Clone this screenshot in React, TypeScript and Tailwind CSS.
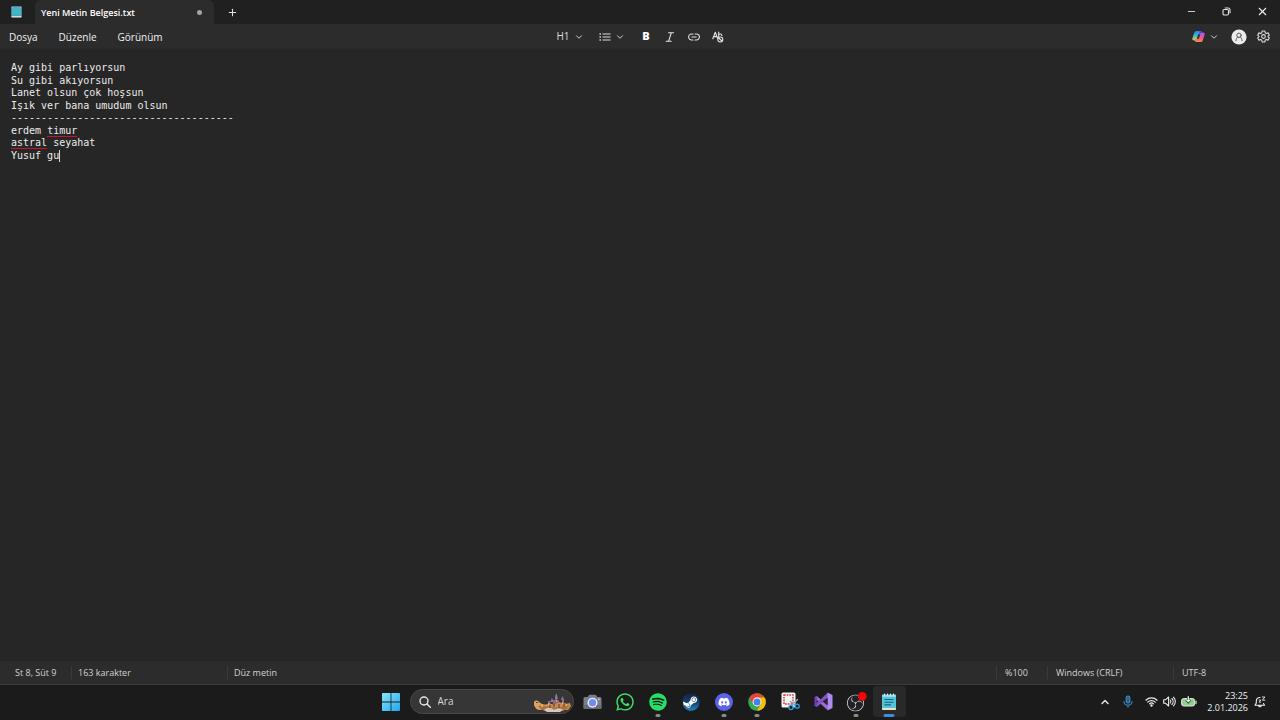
import type { ReactNode } from "react";
import { ChevronDown, ChevronUp, Minus, Plus, X } from "lucide-react";
import { FaSpotify, FaSteam, FaWhatsapp } from "react-icons/fa";
import { FaDiscord } from "react-icons/fa6";
import { SiObsstudio } from "react-icons/si";

type Word = { text: string; misspelled?: boolean };

const documentLines: Word[][] = [
  [{ text: "Ay gibi parlıyorsun" }],
  [{ text: "Su gibi akıyorsun" }],
  [{ text: "Lanet olsun çok hoşsun" }],
  [{ text: "Işık ver bana umudum olsun" }],
  [{ text: "-------------------------------------" }],
  [{ text: "erdem " }, { text: "timur", misspelled: true }],
  [{ text: "astral", misspelled: true }, { text: " seyahat" }],
  [{ text: "Yusuf gu" }],
];

function NotepadIcon({ className }: { className: string }) {
  return (
    <svg viewBox="0 0 16 18" className={className} aria-hidden="true">
      <rect x="1" y="2" width="14" height="15" rx="1.2" fill="#55c3d9" />
      <path d="M1 15h14v1a1 1 0 0 1-1 1H2a1 1 0 0 1-1-1z" fill="#e8e2cd" />
      <rect x="1" y="1.5" width="14" height="2.4" rx="1" fill="#8be0ee" />
      <path d="M3.5 .6v2M6.5 .6v2M9.5 .6v2M12.5 .6v2" stroke="#d8f5fa" strokeWidth="1" />
      <path d="M3.5 6.5h9M3.5 9.2h9M3.5 11.9h6.5" stroke="#17647d" strokeWidth="1.1" />
    </svg>
  );
}

function SmallNotepadIcon() {
  return (
    <svg viewBox="0 0 11 12" className="h-3 w-[11px]" aria-hidden="true">
      <rect x=".5" y=".5" width="10" height="11" rx=".8" fill="#3f9fb2" />
      <rect x="2" y="2" width="7" height="7.5" fill="#43b3c8" />
      <path d="M.5 1h10M1 .8v9.5M10 .8v9.5" stroke="#8fc9d3" strokeWidth=".7" />
      <path d="M.5 10.7h10" stroke="#d8dcd5" strokeWidth="1.4" />
    </svg>
  );
}

function ListIcon() {
  return (
    <svg viewBox="0 0 12 10" className="h-[10px] w-3" fill="none" stroke="#dcdcdc" aria-hidden="true">
      <path d="M3.5 2h8M3.5 5h8M3.5 8h8" strokeWidth="1" />
      <path d="M.5 2h1.4M.5 5h1.4M.5 8h1.4" strokeWidth="1.3" />
    </svg>
  );
}

function LinkIcon() {
  return (
    <svg viewBox="0 0 12 8" className="h-2 w-3" fill="none" stroke="#e2e2e2" strokeWidth="1.1" strokeLinecap="round" aria-hidden="true">
      <path d="M5 1H3.6a3 3 0 0 0 0 6H5M7 1h1.4a3 3 0 0 1 0 6H7M3.8 4h4.4" />
    </svg>
  );
}

function ItalicIcon() {
  return (
    <svg viewBox="0 0 10 10" className="size-[10px]" fill="none" stroke="#e6e6e6" strokeWidth="1.1" strokeLinecap="round" aria-hidden="true">
      <path d="M3.6.8h5M1.2 9.2h5M6.3.8 3.6 9.2" />
    </svg>
  );
}

function ClearFormatIcon() {
  return (
    <svg viewBox="0 0 12 12" className="size-3" fill="none" stroke="#e6e6e6" strokeWidth="1.1" strokeLinecap="round" strokeLinejoin="round" aria-hidden="true">
      <path d="M.8 7.8 3.3 1.2l2.300 6M1.700 5.600h3.200M6.700 1v4.500M6.700 3.700c.8-1.200 3.200-1 3.200.9" />
      <circle cx="8.300" cy="8.500" r="2.500" />
      <path d="m6.700 7 3.200 3" />
    </svg>
  );
}

function CopilotIcon() {
  return (
    <svg viewBox="0 0 14 14" className="size-[13px]" aria-hidden="true">
      <defs>
        <linearGradient id="copilotCool" x1="0" y1="0" x2="0" y2="1">
          <stop offset="0" stopColor="#2b7df0" />
          <stop offset=".5" stopColor="#2fc0d0" />
          <stop offset="1" stopColor="#e8cf2c" />
        </linearGradient>
        <linearGradient id="copilotWarm" x1="0" y1="0" x2="0" y2="1">
          <stop offset="0" stopColor="#a65cf0" />
          <stop offset=".5" stopColor="#f0508f" />
          <stop offset="1" stopColor="#fb8a3c" />
        </linearGradient>
      </defs>
      <path d="M5 1h4.300c.9 0 1.200.6 1.500 1.500L11.400 4H9.200c-1 0-1.500.5-1.800 1.400L6 10c-.3.9-.8 1.200-1.700 1.200H2.200C.7 11.200 0 10.200.5 8.600L2.500 2.800C2.900 1.600 3.700 1 5 1z" fill="url(#copilotCool)" />
      <path d="M9 13H4.700c-.9 0-1.200-.6-1.500-1.500L2.800 10h2c1 0 1.500-.5 1.800-1.400L8 4c.3-.9.8-1.200 1.700-1.200h2.100c1.500 0 2.200 1 1.700 2.600l-2 5.800c-.4 1.200-1.200 1.800-2.500 1.800z" fill="url(#copilotWarm)" />
      <path d="M9.300 1c.9 0 1.200.6 1.500 1.500l.3.800H9.200c-.7 0-1.200.3-1.500.8L8.300 1z" fill="#2b55d9" />
      <path d="M6.700 4.500h2.100L7.300 9.400H5.200z" fill="#2c2c2c" />
    </svg>
  );
}

function AccountIcon() {
  return (
    <svg viewBox="0 0 16 16" className="size-4" aria-hidden="true">
      <circle cx="8" cy="8" r="7.6" fill="#ececec" />
      <g fill="none" stroke="#4c4c4c" strokeWidth=".9" strokeLinecap="round">
        <circle cx="8" cy="6.300" r="2.200" />
        <path d="M4.900 11.700c.1-2 1-3.200 1.900-3.700M11.100 11.700c-.1-2-1-3.200-1.900-3.700" />
      </g>
    </svg>
  );
}

function GearIcon() {
  return (
    <svg viewBox="0 0 24 24" className="size-[13px]" fill="none" stroke="#dedede" strokeWidth="2" strokeLinejoin="round" aria-hidden="true">
      <path d="M9.600 1.800h4.800l.7 3.300 2.100 1.200 3.200-1 2.300 4-2.400 2.300v.8l2.400 2.300-2.300 4-3.200-1-2.100 1.200-.7 3.300H9.600l-.7-3.300-2.100-1.200-3.200 1-2.300-4 2.400-2.300v-.8L1.300 9.300l2.300-4 3.200 1 2.100-1.200z" />
      <circle cx="12" cy="12" r="3.400" />
    </svg>
  );
}

function RestoreIcon() {
  return (
    <svg viewBox="0 0 9 9" className="size-[9px]" fill="none" stroke="#e4e4e4" strokeWidth="1.100" aria-hidden="true">
      <rect x="1" y="2.500" width="5.500" height="5.500" rx="1.200" />
      <path d="M2.800 1h3.600A1.700 1.700 0 0 1 8 2.700v3.600" />
    </svg>
  );
}

function WindowsLogo() {
  return (
    <svg viewBox="0 0 18 18" className="size-[18px]" aria-hidden="true">
      <defs>
        <linearGradient id="windowsBlue" x1="0" y1="0" x2="1" y2="1">
          <stop offset="0" stopColor="#8be3fb" />
          <stop offset="1" stopColor="#1ea7ee" />
        </linearGradient>
      </defs>
      <path d="M0 .8Q0 0 .8 0h7.800v8.600H0zM9.400 0h7.800q.8 0 .8.8v7.800H9.400zM0 9.400h8.600V18H.8q-.8 0-.8-.8zM9.400 9.400H18v7.800q0 .8-.8.8H9.400z" fill="url(#windowsBlue)" />
    </svg>
  );
}

function SearchIcon() {
  return (
    <svg viewBox="0 0 12 12" className="size-3" fill="none" stroke="#e8e8e8" strokeWidth="1.400" strokeLinecap="round" aria-hidden="true">
      <circle cx="5" cy="5" r="4" />
      <path d="m8 8 3.300 3.300" />
    </svg>
  );
}

function CastleArt() {
  return (
    <svg viewBox="0 0 40 20" className="h-5 w-10" aria-hidden="true">
      <path d="M13 17V12h2V9h2v3h3V8h2V4l1-2 1 2v4h2v4h3V7h2v4h2v7H13z" fill="#94657a" />
      <path d="m17 10 2-4 2 4zM22 7l1.500-6L25 7zM28 8l1.500-4L31 8z" fill="#8e76a8" />
      <path d="M12 14l4-3 5 2 5-3 6 2 5-1 1 3-3 4H14z" fill="#c48d50" />
      <path d="M1 10c1-2 4-2 5 0l3 2 5 1-1 4-6 1c-3 0-5-2-6-5z" fill="#d6a465" />
      <path d="M5 14c3-2 7 0 12 1s13 0 19-2c-1 4-4 6-9 6H14c-4 0-7-2-9-5z" fill="#b0723a" />
      <path d="M11 18c3-3 7-3 10 0 3-2 7-2 9 0l-3 2H14z" fill="#d8c4c0" />
      <path d="M3 10.500h2M17 13v3M21 12v3M26 12v4M31 12v3" stroke="#5e3d2b" strokeWidth="1" />
      <path d="M15 12h1M23 9h1M29 11h1M33 13h1M8 14h2" stroke="#ffe0a0" strokeWidth="1.200" />
    </svg>
  );
}

function CameraIcon() {
  return (
    <svg viewBox="0 0 19 16" className="h-4 w-[19px]" aria-hidden="true">
      <path d="M5.500 1.800Q6 .8 7 .8h5q1 0 1.500 1L14.200 3H17q1.500 0 1.500 1.500v9Q18.500 15 17 15H2Q.5 15 .5 13.500v-9Q.5 3 2 3h2.800z" fill="#77808a" />
      <path d="M.5 11h18v2.500Q18.500 15 17 15H2Q.5 15 .5 13.500z" fill="#646c76" />
      <circle cx="9.500" cy="8.700" r="5" fill="#e9ecf5" />
      <circle cx="9.500" cy="8.700" r="3.600" fill="#6f8df0" />
      <path d="M6.500 10.500a3.600 3.600 0 0 0 6.300-.4z" fill="#9a7bea" />
      <circle cx="15.800" cy="5.400" r=".8" fill="#d6dae0" />
    </svg>
  );
}

function SteamIcon() {
  return (
    <svg viewBox="0 0 18 18" className="size-[18px]" aria-hidden="true">
      <defs>
        <linearGradient id="steamBlue" x1="0" y1="0" x2="0" y2="1">
          <stop offset="0" stopColor="#15203c" />
          <stop offset=".55" stopColor="#134474" />
          <stop offset="1" stopColor="#2384bd" />
        </linearGradient>
      </defs>
      <circle cx="9" cy="9" r="8" fill="#ffffff" />
      <FaSteam size={18} fill="url(#steamBlue)" stroke="none" />
    </svg>
  );
}

function ChromeIcon() {
  return (
    <svg viewBox="0 0 18 18" className="size-[18px]" aria-hidden="true">
      <circle cx="9" cy="9" r="8.800" fill="#34a853" />
      <path d="M1.380 4.600A8.800 8.800 0 0 1 16.620 4.600H9L5.200 11.200z" fill="#ea4335" />
      <path d="M16.620 4.600A8.800 8.800 0 0 1 9 17.800L12.800 11.200 9 4.600z" fill="#fbbc05" />
      <circle cx="9" cy="9" r="4.400" fill="#fff" />
      <circle cx="9" cy="9" r="3.500" fill="#3f82f0" />
    </svg>
  );
}

function SnippingIcon() {
  return (
    <svg viewBox="0 0 19 19" className="size-[19px]" aria-hidden="true">
      <rect x=".5" y=".5" width="14" height="15" rx="1.500" fill="#f4f4f4" />
      <rect x="3" y="3" width="9" height="9" fill="none" stroke="#cf3a43" strokeWidth="1.500" strokeDasharray="1.700 1" />
      <path d="m16.500 7.500-6 6M9.500 9.500l6 5" stroke="#8fa6b5" strokeWidth="1.500" strokeLinecap="round" />
      <circle cx="10" cy="15.500" r="2.100" fill="#1a1a1a" stroke="#2c9fe0" strokeWidth="1.300" />
      <circle cx="16.200" cy="14.200" r="2" fill="#1a1a1a" stroke="#2c9fe0" strokeWidth="1.300" />
    </svg>
  );
}

function VisualStudioIcon() {
  return (
    <svg viewBox="0 0 19 19" className="size-[19px]" aria-hidden="true">
      <path d="M.6 5.200 2.800 4l11.500 9.800-.8 4.500L.9 6.300z" fill="#9b6bd8" />
      <path d="M.6 13.800 2.800 15 14.300 5.400l-.8-4.700L.9 12.700z" fill="#8454c4" />
      <path d="M.5 5.200 2.800 4v11L.5 13.800z" fill="#6d40ad" />
      <path d="M13.500.5 18.500 3v13l-5 2.500z" fill="#b18aee" />
      <path d="m8.500 9.500 5-3.800v7.600z" fill="#2b2038" />
    </svg>
  );
}

function ObsIcon() {
  return (
    <svg viewBox="0 0 22 22" className="size-[22px]" aria-hidden="true">
      <circle cx="10.500" cy="12" r="8.300" fill="#222125" />
      <SiObsstudio x={2} y={3.5} size={17} fill="#d6d6d6" />
      <circle cx="17.300" cy="5.300" r="4.400" fill="#f00509" />
    </svg>
  );
}

function MicIcon() {
  return (
    <svg viewBox="0 0 10 13" className="h-[13px] w-[10px]" fill="none" stroke="#3c92cf" strokeWidth="1.100" strokeLinecap="round" aria-hidden="true">
      <rect x="3.200" y="1" width="3.600" height="7" rx="1.800" fill="#245f8c" />
      <path d="M1 6.500a4 3.700 0 0 0 8 0M5 10.200v2" />
    </svg>
  );
}

function WifiIcon() {
  return (
    <svg viewBox="0 0 13 11" className="h-[11px] w-[13px]" fill="none" stroke="#ededed" strokeWidth="1.200" strokeLinecap="round" aria-hidden="true">
      <path d="M.9 4.200a8 8 0 0 1 11.200 0M2.700 6.100a5.400 5.400 0 0 1 7.600 0M4.500 7.900a2.900 2.900 0 0 1 4 0" />
      <circle cx="6.500" cy="9.500" r=".6" fill="#ededed" />
    </svg>
  );
}

function SpeakerIcon() {
  return (
    <svg viewBox="0 0 13 11" className="h-[11px] w-[13px]" fill="none" stroke="#ededed" strokeWidth="1.100" strokeLinecap="round" strokeLinejoin="round" aria-hidden="true">
      <path d="M.7 3.700h2L5.600 1v9L2.700 7.300h-2zM7.300 4a2.300 2.300 0 0 1 0 3M8.900 2.500a4.300 4.300 0 0 1 0 6M10.500 1.100a6.300 6.300 0 0 1 0 8.800" />
    </svg>
  );
}

function BatteryIcon() {
  return (
    <svg viewBox="0 0 16 11" className="h-[11px] w-4" aria-hidden="true">
      <rect x=".6" y="2.600" width="13" height="7.400" rx="2" fill="#8fd091" stroke="#dcefdc" strokeWidth="1" />
      <path d="M15 5v2.600" stroke="#dcefdc" strokeWidth="1.200" strokeLinecap="round" />
      <path d="M7.300.3v5M5.300 3.800l2 2.200 2-2.200" fill="none" stroke="#1c2a1c" strokeWidth="2.400" />
      <path d="M7.300.3v5M5.300 3.600l2 2.100 2-2.100" fill="none" stroke="#fff" strokeWidth="1.200" />
    </svg>
  );
}

function BellIcon() {
  return (
    <svg viewBox="0 0 12 12" className="size-3" fill="none" stroke="#ededed" strokeWidth="1.100" strokeLinecap="round" strokeLinejoin="round" aria-hidden="true">
      <path d="M6 1.500a3.500 3.500 0 0 0-3.700 3.500v2L1 9.300h9.500L9.500 7.500M4.600 9.500a1.300 1.300 0 0 0 2.600 0" />
      <path d="M8.300 1h2.600L8.300 4.200h2.600M5.200 4h1.500L5.200 6.200h1.500" strokeWidth=".9" />
    </svg>
  );
}

function ToolButton({ label, className, children }: { label: string; className: string; children: ReactNode }) {
  return (
    <button type="button" aria-label={label} className={`flex h-5 items-center justify-center rounded hover:bg-white/10 ${className}`}>
      {children}
    </button>
  );
}

type AppState = "closed" | "running" | "active";

function TaskbarApp({ label, state = "closed", children }: { label: string; state?: AppState; children: ReactNode }) {
  return (
    <button
      type="button"
      aria-label={label}
      className={`relative flex h-[31px] w-[33px] items-center justify-center rounded ${state === "active" ? "bg-[#292929]" : "hover:bg-white/5"}`}
    >
      {children}
      {state === "running" && <span className="absolute bottom-0 left-1/2 h-[3px] w-[5px] -translate-x-1/2 rounded-full bg-[#8b8b8b]" />}
      {state === "active" && <span className="absolute bottom-0 left-1/2 h-[3px] w-[11px] -translate-x-1/2 rounded-full bg-[#3a8fd8]" />}
    </button>
  );
}

function TitleBar() {
  return (
    <header className="flex h-6 items-stretch bg-[#202020]">
      <div className="flex w-[35px] items-center pl-[11px]">
        <SmallNotepadIcon />
      </div>
      <div className="flex w-[179px] items-center justify-between rounded-t-md bg-[#2c2c2c] pt-px pr-3 pl-[6px]">
        <span className="text-[9px] font-semibold text-white">Yeni Metin Belgesi.txt</span>
        <span className="size-[5px] rounded-full bg-[#a5a5a5]" />
      </div>
      <button type="button" aria-label="Yeni sekme" className="flex w-9 items-center justify-center pt-px text-[#e0e0e0]">
        <Plus size={11} strokeWidth={2.2} />
      </button>
      <div className="ml-auto flex h-[22px]">
        <button type="button" aria-label="Simge durumuna küçült" className="flex w-[35px] items-center justify-center text-[#dddddd]">
          <Minus size={11} strokeWidth={2} />
        </button>
        <button type="button" aria-label="Önceki boyut" className="flex w-[35px] items-center justify-center">
          <RestoreIcon />
        </button>
        <button type="button" aria-label="Kapat" className="flex w-9 items-center justify-center text-[#f0f0f0]">
          <X size={13} strokeWidth={2} />
        </button>
      </div>
    </header>
  );
}

function MenuBar() {
  return (
    <div className="grid h-[25px] grid-cols-[1fr_auto_1fr] items-center border-b border-[#292929] bg-[#2c2c2c] pt-px">
      <nav className="flex gap-[21px] pt-px pl-[9px] text-[10px] font-medium text-[#f2f2f2]">
        <button type="button">Dosya</button>
        <button type="button">Düzenle</button>
        <button type="button">Görünüm</button>
      </nav>
      <div className="flex items-center text-[#dcdcdc]">
        <ToolButton label="Başlıklar" className="w-9 gap-1 pl-1">
          <span className="text-[10px]">H1</span>
          <ChevronDown size={10} strokeWidth={2.2} />
        </ToolButton>
        <ToolButton label="Listeler" className="w-12 gap-1 pl-1">
          <ListIcon />
          <ChevronDown size={10} strokeWidth={2.2} />
        </ToolButton>
        <ToolButton label="Kalın" className="w-6">
          <span className="text-[11px] font-extrabold text-white">B</span>
        </ToolButton>
        <ToolButton label="İtalik" className="w-6">
          <ItalicIcon />
        </ToolButton>
        <ToolButton label="Bağlantı" className="w-6">
          <LinkIcon />
        </ToolButton>
        <ToolButton label="Biçimlendirmeyi temizle" className="w-6">
          <ClearFormatIcon />
        </ToolButton>
      </div>
      <div className="flex items-center justify-end pr-[10px] text-[#dcdcdc]">
        <ToolButton label="Copilot" className="mr-3 gap-1">
          <CopilotIcon />
          <ChevronDown size={10} strokeWidth={2.2} />
        </ToolButton>
        <ToolButton label="Hesap" className="mr-[10px]">
          <AccountIcon />
        </ToolButton>
        <ToolButton label="Ayarlar" className="">
          <GearIcon />
        </ToolButton>
      </div>
    </div>
  );
}

function Editor() {
  return (
    <main className="flex flex-1 flex-col bg-[#262626]">
      <div
        role="textbox"
        aria-multiline="true"
        aria-label="Metin düzenleyici"
        contentEditable
        suppressContentEditableWarning
        spellCheck={false}
        className="flex-1 px-[11px] pt-[13px] font-['DejaVu_Sans_Mono',monospace] text-[10px] text-[#ececec] outline-none"
      >
        <div className="grid h-[100px] grid-rows-8">
          {documentLines.map((line, index) => (
            <div key={index} className="flex items-center leading-3 whitespace-pre">
              {line.map((word) => (
                <span
                  key={word.text}
                  className={word.misspelled ? "h-3 border-b border-[#c8142a]" : "h-3"}
                >
                  {word.text}
                </span>
              ))}
              {index === documentLines.length - 1 && <span className="h-3 w-px bg-[#d8d8d8]" />}
            </div>
          ))}
        </div>
      </div>
    </main>
  );
}

function StatusBar() {
  return (
    <footer className="flex h-6 items-center border-b border-[#3b3b3b] bg-[#2c2c2c] text-[9px] font-medium text-[#d2d2d2]">
      <span className="w-[71px] pl-[15px]">St 8, Süt 9</span>
      <span className="w-[156px] border-l border-[#3a3a3a] pl-[6px]">163 karakter</span>
      <span className="flex-1 border-l border-[#3a3a3a] pl-[6px]">Düz metin</span>
      <span className="w-[51px] border-l border-[#3a3a3a] pl-2">%100</span>
      <span className="w-[126px] border-l border-[#3a3a3a] pl-2">Windows (CRLF)</span>
      <span className="w-[107px] border-l border-[#3a3a3a] pl-2">UTF-8</span>
    </footer>
  );
}

function Taskbar() {
  return (
    <div className="grid h-[35px] grid-cols-[1fr_auto_1fr] items-center bg-[#1b1b1b] pb-[2px]">
      <div />
      <div className="flex items-center">
        <TaskbarApp label="Başlat">
          <WindowsLogo />
        </TaskbarApp>
        <label className="mx-[2px] flex h-[25px] w-[164px] items-center rounded-full border border-[#484848] bg-[#363636] pl-2">
          <SearchIcon />
          <input
            type="text"
            aria-label="Ara"
            placeholder="Ara"
            className="ml-[7px] w-0 flex-1 bg-transparent text-[10px] text-white outline-none placeholder:text-[#d6d6d6]"
          />
          <CastleArt />
        </label>
        <TaskbarApp label="Kamera">
          <CameraIcon />
        </TaskbarApp>
        <TaskbarApp label="WhatsApp">
          <FaWhatsapp size={20} color="#3be069" />
        </TaskbarApp>
        <TaskbarApp label="Spotify" state="running">
          <FaSpotify size={18} color="#25df66" />
        </TaskbarApp>
        <TaskbarApp label="Steam">
          <SteamIcon />
        </TaskbarApp>
        <TaskbarApp label="Discord" state="running">
          <span className="flex size-[18px] items-center justify-center rounded-full bg-[#5a62e8]">
            <FaDiscord size={12} color="#ffffff" />
          </span>
        </TaskbarApp>
        <TaskbarApp label="Chrome" state="running">
          <ChromeIcon />
        </TaskbarApp>
        <TaskbarApp label="Ekran Alıntısı Aracı">
          <SnippingIcon />
        </TaskbarApp>
        <TaskbarApp label="Visual Studio">
          <VisualStudioIcon />
        </TaskbarApp>
        <TaskbarApp label="OBS Studio" state="running">
          <ObsIcon />
        </TaskbarApp>
        <TaskbarApp label="Not Defteri" state="active">
          <NotepadIcon className="h-[18px] w-4" />
        </TaskbarApp>
      </div>
      <div className="flex items-center justify-end pr-[14px]">
        <button type="button" aria-label="Gizli simgeleri göster" className="mr-3 text-[#eeeeee]">
          <ChevronUp size={12} strokeWidth={2.8} />
        </button>
        <button type="button" aria-label="Mikrofon" className="mr-3">
          <MicIcon />
        </button>
        <button type="button" aria-label="Ağ, ses ve pil" className="mr-[10px] flex items-center gap-[5px]">
          <WifiIcon />
          <SpeakerIcon />
          <BatteryIcon />
        </button>
        <button type="button" className="mr-[6px] text-right text-[9px] leading-3 text-[#f2f2f2]">
          <span className="block">23:25</span>
          <span className="block">2.01.2026</span>
        </button>
        <button type="button" aria-label="Bildirimler">
          <BellIcon />
        </button>
      </div>
    </div>
  );
}

export default function App() {
  return (
    <div className="flex min-h-screen flex-col bg-[#262626] font-['Open_Sans','Noto_Sans',sans-serif]">
      <TitleBar />
      <MenuBar />
      <Editor />
      <StatusBar />
      <Taskbar />
    </div>
  );
}
